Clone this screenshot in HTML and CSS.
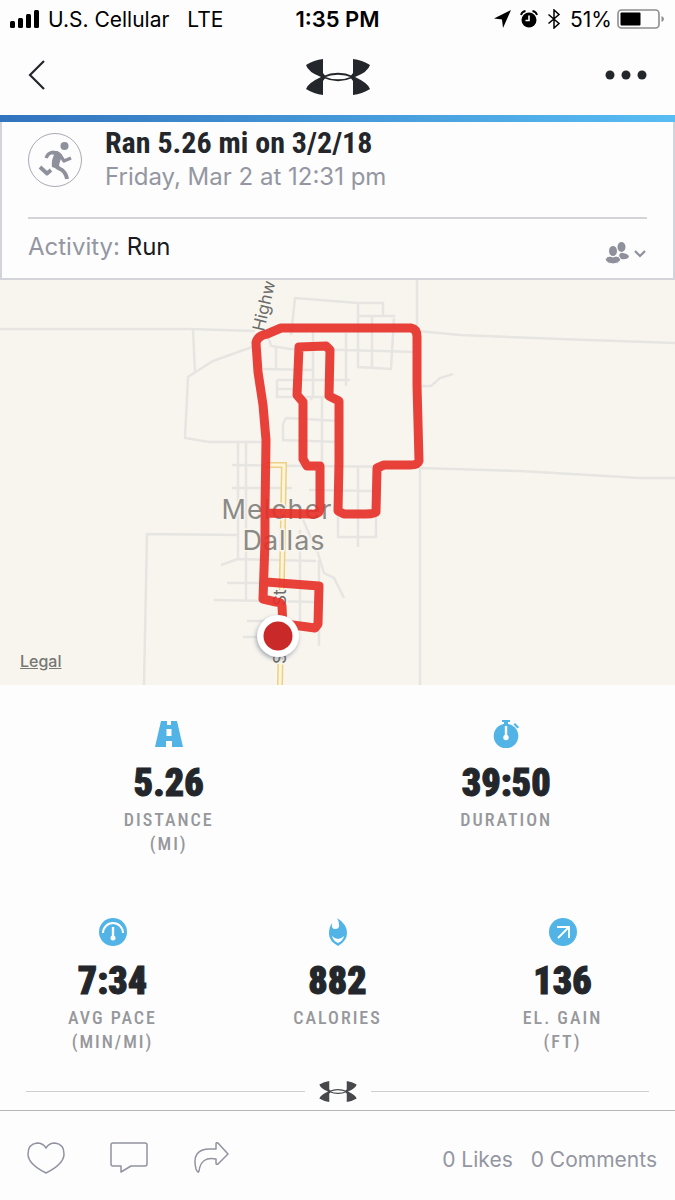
FILE: index.html
```html
<!DOCTYPE html>
<html lang="en">
<head>
  <meta charset="UTF-8">
  <meta name="viewport" content="width=device-width, initial-scale=1.0">
  <title>Ran 5.26 mi on 3/2/18</title>
  <link rel="stylesheet" href="styles.css">
</head>
<body>

  <!-- Shared logo shape -->
  <svg class="defs" width="0" height="0" aria-hidden="true">
    <symbol id="logo" viewBox="0 0 64 36">
      <path d="M0 6Q8 1 17 0V14L20 18L17 22V36Q8 35 0 30Q2 24 15 18Q2 13 0 6ZM64 6Q56 1 47 0V14L44 18L47 22V36Q56 35 64 30Q62 24 49 18Q62 13 64 6Z" fill="currentColor"/>
      <path d="M17 18Q32 11.500 47 18Q32 24.500 17 18Z" fill="none" stroke="currentColor" stroke-width="1.800"/>
    </symbol>
  </svg>

  <!-- Status bar -->
  <div class="status-bar">
    <div class="status-left">
      <svg width="30" height="18" viewBox="0 0 30 18">
        <rect x="0" y="11" width="5" height="7" rx="1.500"/>
        <rect x="8" y="8" width="5" height="10" rx="1.500"/>
        <rect x="16" y="4" width="5" height="14" rx="1.500"/>
        <rect x="24" y="0" width="5" height="18" rx="1.500"/>
      </svg>
      <span class="carrier">U.S. Cellular</span>
      <span>LTE</span>
    </div>
    <div class="status-time">1:35 PM</div>
    <div class="status-right">
      <svg width="17" height="18" viewBox="0 0 17 18"><path d="M17 0L9 18L8 9.500L0 8.500Z"/></svg>
      <svg width="18" height="18" viewBox="0 0 18 18">
        <circle cx="9" cy="10" r="7.500"/>
        <path d="M1 5Q2 1.500 5.500 1M12.500 1Q16 1.500 17 5" fill="none" stroke="#000" stroke-width="1.800"/>
        <path d="M9 5.500V10.500H5.500" fill="none" stroke="#fff" stroke-width="1.600"/>
      </svg>
      <svg width="14" height="20" viewBox="0 0 14 20"><path d="M1.500 5.500L12 14.500L7 19V1L12 5.500L1.500 14.500" fill="none" stroke="#000" stroke-width="1.500"/></svg>
      <span class="percent">51%</span>
      <svg width="48" height="20" viewBox="0 0 48 20">
        <rect x="1" y="1" width="41" height="18" rx="3.500" fill="none" stroke="#8d8d8d" stroke-width="1.600"/>
        <rect x="3.500" y="3.500" width="20" height="13" rx="1"/>
        <path d="M44.500 7Q47 8 47 10T44.500 13Z" fill="#8d8d8d"/>
      </svg>
    </div>
  </div>

  <!-- Header -->
  <header class="nav">
    <button class="icon-btn back" aria-label="Back">
      <svg width="18" height="30" viewBox="0 0 18 30"><path d="M16 1L2 15L16 29" fill="none" stroke="currentColor" stroke-width="2.200"/></svg>
    </button>
    <svg width="64" height="36"><use href="#logo"/></svg>
    <button class="icon-btn more" aria-label="More">
      <svg width="42" height="10" viewBox="0 0 42 10" fill="currentColor"><circle cx="5" cy="5" r="4.500"/><circle cx="21" cy="5" r="4.500"/><circle cx="37" cy="5" r="4.500"/></svg>
    </button>
  </header>

  <main>
    <!-- Workout summary -->
    <section class="card">
      <div class="summary">
        <svg class="avatar" width="54" height="54" viewBox="0 0 54 54">
          <circle cx="27" cy="27" r="26.500" fill="none" stroke="#a9aab2"/>
          <circle cx="36.500" cy="13" r="4" fill="#8e909c"/>
          <path d="M23 18Q31 17 34 22L31 32L33 37L24 34Q23 28 26 22Z" fill="#8e909c"/>
          <g fill="none" stroke="#8e909c" stroke-linejoin="round">
            <path d="M30 20L24 19.500Q20 20 18 25" stroke-width="3.300"/>
            <path d="M32 22L36 28L43 25" stroke-width="3.300"/>
            <path d="M27 32Q29 35 34 37Q38 40 39 46" stroke-width="4"/>
            <path d="M12 34L19 40.500L23 37" stroke-width="3.800"/>
          </g>
        </svg>
        <div>
          <h1>Ran 5.26 mi on 3/2/18</h1>
          <p class="date">Friday, Mar 2 at 12:31 pm</p>
        </div>
      </div>
      <div class="activity">
        <p>Activity: <span class="activity-name">Run</span></p>
        <button class="icon-btn privacy" aria-label="Privacy">
          <svg width="42" height="24" viewBox="0 0 42 24">
            <g fill="#8e909c">
              <ellipse cx="16.500" cy="6" rx="4" ry="5"/>
              <path d="M14 15Q15 11 18 12Q24 13 24 16Q22 19 16 18Z"/>
              <g stroke="#fff" stroke-width="1">
                <ellipse cx="8" cy="10" rx="4.500" ry="5.500"/>
                <path d="M0 19Q1 15 5 15Q8 17 11 15Q15 15 16 19Q13 23 8 23T0 19Z"/>
              </g>
            </g>
            <path d="M30 10L35 15L40 10" fill="none" stroke="#8e909c" stroke-width="2.200"/>
          </svg>
        </button>
      </div>
    </section>

    <!-- Route map -->
    <section class="map">
      <svg class="map-canvas" viewBox="0 280 675 405">
        <g class="roads">
          <path d="M0 329L190 329L255 331M418 331L460 335L560 339L675 343M417 280V329M420 467V685M420 468L520 471L640 478L675 478"/>
          <path d="M193 330L195 372M255 346L213 361L188 377L185 438L209 442L262 442"/>
          <path d="M291 335L295 298L358 303L383 303V315M358 303V367L391 369L394 318M358 316H395M372 317V367"/>
          <path d="M268 336L271 346L290 349L345 350L414 352M276 348V368M263 369L312 370M313 330V395L311 400M346 333V386M277 380H350M277 380V397H340M277 389H295"/>
          <path d="M418 386H431L440 378L453 374M322 398V466M340 421L286 418L283 424V440L339 442M238 442V560M246 442V600"/>
          <path d="M232 465L300 466L420 467M232 488H292M309 490L376 491M358 467V547M338 512V537H376V514M301 515L317 552"/>
          <path d="M144 685L147 534L238 535M221 565L238 559L316 561M227 583H282M214 600L318 602M300 530V626M317 550L324 573L334 578L344 598M319 560V646M247 621H275M243 637H268"/>
        </g>
        <path d="M266 465H284L280 685" fill="none" stroke="#edcf87" stroke-width="6"/>
        <path d="M266 465H284L280 685" fill="none" stroke="#fff6d7" stroke-width="3"/>
        <g class="map-labels">
          <text class="town" x="277" y="519">Melcher</text>
          <text class="town" x="284" y="550">Dallas</text>
          <text class="street" transform="translate(264 332) rotate(-77)">Highw</text>
          <text class="street" transform="translate(286 664) rotate(-90)">S</text>
          <text class="street" transform="translate(286 606) rotate(-90)">St</text>
        </g>
        <path class="route" d="M278 636L283 627L282 606Q281 602 276 602L263 599L265 541V510L266 440L263 405L258 372L256 343Q257 336 267 334L281 328L345 328L411 328Q417 329 417 337L417 385L419 461Q418 465 410 465L384 465L377 468L376 512Q375 514 366 514L344 514L338 511L339 462V401L329 396L330 350L326 346L299 347L297 395L303 402L303 459L307 466L320 466L320 509Q319 515 311 514L265 513M266 582L319 586L318 624L315 628L285 624"/>
        <circle class="pin" cx="278" cy="636" r="21"/>
        <circle cx="278" cy="636" r="14.500" fill="#ca292a"/>
      </svg>
      <a class="legal" href="#">Legal</a>
    </section>

    <!-- Stats -->
    <section class="stats two">
      <div class="stat">
        <svg width="30" height="28" viewBox="0 0 30 28">
          <path d="M7 1H23L29 27H1Z" fill="#52b4e6"/>
          <path d="M13 0H17V5H13ZM12.500 9H17.500V16H12.500ZM12 21H18V28H12Z" fill="#fff"/>
        </svg>
        <strong>5.26</strong>
        <span>DISTANCE<br>(MI)</span>
      </div>
      <div class="stat">
        <svg width="30" height="28" viewBox="0 0 30 28">
          <circle cx="15" cy="16" r="12.300" fill="#52b4e6"/>
          <path d="M11 0H19V2H17V5H13V2H11ZM24 3L28 7L26.500 8.500L22.500 4.500Z" fill="#52b4e6"/>
          <path d="M15 6V18" stroke="#fff" stroke-width="2.400"/>
          <circle cx="15" cy="17.500" r="2.700" fill="#fff"/>
        </svg>
        <strong>39:50</strong>
        <span>DURATION</span>
      </div>
    </section>
    <section class="stats three">
      <div class="stat">
        <svg width="30" height="28" viewBox="0 0 30 28">
          <circle cx="15" cy="14" r="14" fill="#52b4e6"/>
          <path d="M5 15A10 10 0 0 1 25 15" fill="none" stroke="#fff" stroke-width="2"/>
          <path d="M15 9V20" stroke="#fff" stroke-width="2.400"/>
          <circle cx="15" cy="20" r="2.500" fill="#fff"/>
        </svg>
        <strong>7:34</strong>
        <span>AVG PACE<br>(MIN/MI)</span>
      </div>
      <div class="stat">
        <svg width="30" height="28" viewBox="0 0 30 28">
          <path d="M14 0Q24 6 24 15Q24 23 15 28Q6 23 6 16Q6 9 9 5Q8 11 12 11Q17 11 16 6Q16 3 14 0Z" fill="#52b4e6"/>
          <path d="M9 18Q15 24 21 18Q20 23 15 25Q10 23 9 18Z" fill="#fff"/>
        </svg>
        <strong>882</strong>
        <span>CALORIES</span>
      </div>
      <div class="stat">
        <svg width="30" height="28" viewBox="0 0 30 28">
          <circle cx="15" cy="14" r="14" fill="#52b4e6"/>
          <path d="M9 9H21V20M21 9L10 20" fill="none" stroke="#fff" stroke-width="1.800"/>
        </svg>
        <strong>136</strong>
        <span>EL. GAIN<br>(FT)</span>
      </div>
    </section>

    <div class="divider">
      <svg width="38" height="21"><use href="#logo"/></svg>
    </div>
  </main>

  <!-- Footer actions -->
  <footer>
    <button class="icon-btn" aria-label="Like">
      <svg width="38" height="32" viewBox="0 0 38 32"><path d="M19 6Q16 1 10 1Q1 2 1 12Q1 22 19 31Q37 22 37 12Q37 2 28 1Q22 1 19 6Z"/></svg>
    </button>
    <button class="icon-btn" aria-label="Comment">
      <svg width="38" height="32" viewBox="0 0 38 32"><path d="M3 1H35Q37 1 37 3V22Q37 24 35 24H21L11 30V24H3Q1 24 1 22V3Q1 1 3 1Z"/></svg>
    </button>
    <button class="icon-btn" aria-label="Share">
      <svg width="38" height="32" viewBox="0 0 38 32"><path d="M23 7V2Q23 0 25 1L35 12L25 22Q23 23 23 21V17Q8 14 6 29Q5 32 3 27Q-2 7 17 7Z"/></svg>
    </button>
    <div class="counts"><a href="#">0 Likes</a><a href="#">0 Comments</a></div>
  </footer>

</body>
</html>
```
FILE: styles.css
```css
* {
  box-sizing: border-box;
}
body {
  margin: 0;
  font-family: Inter, "Liberation Sans", sans-serif;
  background-color: #fdfdfe;
  color: #23262a;
}
svg {
  display: block;
  flex: none;
}
.defs {
  position: absolute;
}
h1, p {
  margin: 0;
}
a {
  color: inherit;
  text-decoration: none;
}
.icon-btn {
  padding: 0;
  border: 0;
  background: none;
  color: inherit;
  cursor: pointer;
}

/* Status bar */
.status-bar {
  display: grid;
  grid-template-columns: 1fr auto 1fr;
  align-items: center;
  height: 38px;
  padding: 0 10px;
  font-size: 21px;
  color: #000;
}
.status-left, .status-right {
  display: flex;
  align-items: center;
}
.carrier {
  margin: 0 18px 0 8px;
}
.status-time {
  font-size: 22px;
  font-weight: 600;
}
.status-right {
  justify-content: flex-end;
  gap: 9px;
}
.percent {
  margin-right: -4px;
}

/* Header */
.nav {
  display: grid;
  grid-template-columns: 1fr auto 1fr;
  align-items: center;
  height: 84px;
  padding: 0 28px;
  border-bottom: 7px solid;
  border-image: linear-gradient(to right, #3273bd, #58bdf3) 1;
}
.back, .more {
  margin-bottom: 4px;
}
.back {
  justify-self: start;
}
.more {
  justify-self: end;
}

/* Workout summary */
.card {
  padding: 4px 26px;
  border: 2px solid #d3d4d9;
  border-top: 0;
}
.summary {
  display: flex;
  gap: 23px;
  height: 93px;
  border-bottom: 2px solid #d3d4d8;
}
.avatar {
  margin-top: 7px;
}
h1 {
  font-family: "Roboto Condensed", "Liberation Sans Narrow", Roboto, sans-serif;
  font-size: 30px;
  line-height: 34px;
}
.date {
  font-size: 24px;
  line-height: 34px;
  color: #9496a1;
}
.activity {
  display: flex;
  justify-content: space-between;
  align-items: center;
  height: 55px;
  font-size: 24px;
  color: #9496a1;
}
.activity-name {
  color: #191b1e;
}
.privacy {
  margin-top: 12px;
}

/* Map */
.map {
  position: relative;
  background-color: #f8f5ef;
}
.map-canvas {
  width: 100%;
  height: auto;
}
.roads {
  fill: none;
  stroke: #e6e5e1;
  stroke-width: 2.5;
}
.map-labels {
  paint-order: stroke;
  stroke: #f8f5ef;
  stroke-width: 3;
}
.town {
  font-size: 27px;
  letter-spacing: 1px;
  text-anchor: middle;
  fill: #8a8a87;
}
.street {
  font-size: 17px;
  fill: #6b6b69;
}
.route {
  fill: none;
  stroke: #e62e26;
  stroke-width: 9;
  stroke-linejoin: round;
  opacity: 0.9;
}
.pin {
  fill: #fff;
  filter: drop-shadow(-1px 2px 2px rgba(80, 95, 115, 0.5));
}
.legal {
  position: absolute;
  left: 20px;
  bottom: 14px;
  font-size: 16px;
  font-weight: 500;
  line-height: 20px;
  color: #777774;
  text-decoration: underline;
}

/* Stats */
.stats {
  display: grid;
  height: 198px;
  padding-top: 35px;
}
.two {
  grid-template-columns: repeat(2, 1fr);
}
.three {
  grid-template-columns: repeat(3, 1fr);
}
.stat {
  display: flex;
  flex-direction: column;
  align-items: center;
  text-align: center;
  font-family: "Roboto Condensed", "Liberation Sans Narrow", Roboto, sans-serif;
}
.stat strong {
  margin: 14px 0 4px;
  font-size: 38px;
  font-weight: 900;
  line-height: 42px;
  -webkit-text-stroke: 1px currentColor;
}
.stat span {
  font-size: 18px;
  font-weight: 500;
  line-height: 24px;
  letter-spacing: 2px;
  color: #97989b;
}

/* Divider */
.divider {
  display: flex;
  align-items: center;
  gap: 14px;
  height: 29px;
  padding: 0 26px 9px;
  color: #46484b;
}
.divider::before, .divider::after {
  content: "";
  flex: 1;
  height: 1px;
  background-color: #cfd0d1;
}

/* Footer */
footer {
  display: flex;
  align-items: center;
  gap: 45px;
  height: 90px;
  padding: 4px 18px 0 27px;
  border-top: 1px solid #b5b6ba;
}
footer path {
  fill: none;
  stroke: #9193a0;
  stroke-width: 1.5;
  stroke-linejoin: round;
}
.counts {
  display: flex;
  gap: 18px;
  margin-left: auto;
  padding-top: 4px;
  font-size: 21px;
  color: #9496a1;
}
```
